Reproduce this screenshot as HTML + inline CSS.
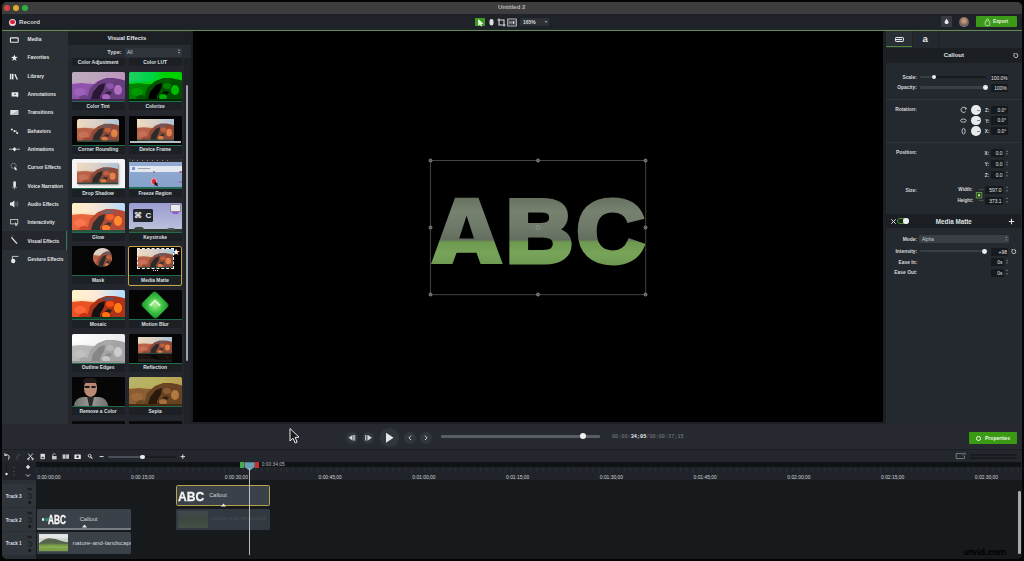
<!DOCTYPE html>
<html><head><meta charset="utf-8">
<style>
*{margin:0;padding:0;box-sizing:border-box}
html,body{width:1024px;height:561px;overflow:hidden;background:#040404;font-family:"Liberation Sans",sans-serif;color:#e8e8e8}
.a{position:absolute}
.t{position:absolute;white-space:nowrap;font-weight:bold;line-height:1}
.c{border-radius:50%}
.sb{position:absolute;margin-top:1.4px;left:27.6px;font-size:4.85px;font-weight:bold;color:#e4e6e8;white-space:nowrap;line-height:1}
.tile{position:absolute;width:53px;height:38px;background:#1c1f23;border-radius:1.5px;overflow:hidden}
.tile .img{position:absolute;left:0;top:0;width:53px;height:29px}
.tile .gl{position:absolute;left:0;top:29px;width:53px;height:1px;background:#1f6b4a}
.tile .lb{position:absolute;margin-top:1.4px;left:0;top:31.5px;width:53px;text-align:center;font-size:4.9px;font-weight:bold;color:#dfe1e3;line-height:1;white-space:nowrap}
.pl{position:absolute;margin-top:1.4px;font-size:4.6px;font-weight:bold;color:#d8dadc;white-space:nowrap;line-height:1;text-align:right}
.vb{position:absolute;padding-top:1px;background:#16191d;border-radius:1px;font-size:4.6px;color:#e6e8ea;text-align:right;line-height:8px;padding-right:1.5px;white-space:nowrap}
.rl{position:absolute;top:476.1px;font-size:4.9px;color:#d0d2d4;white-space:nowrap;line-height:1}
</style></head><body>
<!-- window background -->
<div class="a" style="left:1.5px;top:1.5px;width:1020px;height:557px;background:#23272d;border-radius:5px;overflow:hidden">
</div>
<!-- title bar -->
<div class="a" style="left:1.5px;top:1.5px;width:1020px;height:12px;background:#3d3d3e;border-radius:5px 5px 0 0"></div>
<div class="a c" style="left:4.3px;top:4.7px;width:6.2px;height:6.2px;background:#d4473f"></div>
<div class="a c" style="left:13.1px;top:4.7px;width:6.2px;height:6.2px;background:#d9ad2c"></div>
<div class="a c" style="left:21.9px;top:4.7px;width:6.2px;height:6.2px;background:#2ab33c"></div>
<div class="t" style="left:498px;top:4.2px;font-size:6px;color:#b9b9b9">Untitled 2</div>
<!-- toolbar -->
<div class="a" style="left:1.5px;top:13.5px;width:1020px;height:16.5px;background:#1f2228"></div>
<div class="a" style="left:1.5px;top:29.2px;width:1020px;height:2.6px;background:#1f2a22"></div><div class="a" style="left:1.5px;top:29.9px;width:1020px;height:1.2px;background:#66895a"></div>
<div class="a c" style="left:9px;top:18.8px;width:7px;height:7px;background:#f2d4d4"></div>
<div class="a c" style="left:10.3px;top:20.1px;width:4.4px;height:4.4px;background:#d8203a"></div>
<div class="t" style="left:19px;top:19.3px;font-size:6.1px;color:#d4d6d8">Record</div>
<!-- center tools -->
<div class="a" style="left:474.6px;top:17.6px;width:10.6px;height:8.5px;background:#3e9a1f"></div>
<svg class="a" style="left:474.6px;top:17.6px" width="11" height="9" viewBox="0 0 11 9"><path d="M3.2 1 L3.2 8 L4.9 6.5 L6.2 8.6 L7.3 8 L6.1 6 L8.4 5.8 Z" fill="#f0faea"/></svg>
<svg class="a" style="left:487px;top:17px" width="9" height="10" viewBox="0 0 9 10"><path d="M2.5 4 Q2.5 2 4.5 2 Q6.5 2 6.5 4 L6.5 6.5 Q6.5 8.5 4.5 8.5 Q2.5 8.5 2.5 6.5 Z" fill="#d9dbdd"/></svg>
<svg class="a" style="left:496px;top:16.5px" width="11" height="11" viewBox="0 0 11 11"><path d="M3 1.5 V8 H9.5 M1.5 3 H8 V9.5" stroke="#d9dbdd" stroke-width="1.1" fill="none"/></svg>
<svg class="a" style="left:507px;top:17.5px" width="10" height="9" viewBox="0 0 10 9"><rect x="0.7" y="1" width="8.6" height="7" fill="none" stroke="#c9cbcd" stroke-width="0.9"/><path d="M0.7 3.2 H9.3 M0.7 5.8 H9.3" stroke="#c9cbcd" stroke-width="0.6"/><path d="M2 4.5 H5" stroke="#c9cbcd" stroke-width="0.6"/><circle cx="6.5" cy="4.5" r="0.9" fill="#fff"/></svg>
<div class="a" style="left:520px;top:18.3px;width:29px;height:7.3px;background:#2c3138;border-radius:1px"></div>
<div class="t" style="left:523px;top:19.8px;font-size:5px;color:#d8dadc;font-weight:bold">165%</div>
<div class="t" style="left:545px;top:20px;font-size:4px;color:#9a9da0">&#9662;</div>
<!-- right tools -->
<div class="a" style="left:940.8px;top:15.8px;width:11.2px;height:11px;background:#363b42;border-radius:1px"></div>
<svg class="a" style="left:940.8px;top:15.8px" width="12" height="11" viewBox="0 0 12 11"><path d="M5.6 2.8 Q7.6 5 7.6 6.5 Q7.6 8 5.6 8 Q3.6 8 3.6 6.5 Q3.6 5 5.6 2.8Z" fill="#e6e8ea"/></svg>
<div class="a c" style="left:958.5px;top:16.8px;width:10px;height:10px;background:radial-gradient(circle at 50% 40%,#c9a58f 0,#a9826c 35%,#6c5a55 60%,#8a95a5 75%,#1f2228 100%)"></div>
<div class="a" style="left:975.9px;top:15.8px;width:41px;height:11.5px;background:#3b9a19;border-radius:1px"></div>
<svg class="a" style="left:983px;top:16.5px" width="9" height="10" viewBox="0 0 9 10"><path d="M3.4 3.6 Q3.4 1.6 4.5 1.6 Q5.6 1.6 5.6 3.6" stroke="#cfe8c0" stroke-width="0.7" fill="none"/><rect x="2.2" y="3.8" width="4.6" height="4.8" rx="1.2" stroke="#cfe8c0" stroke-width="0.8" fill="none"/></svg>
<div class="t" style="left:993px;top:20.2px;font-size:4.75px;color:#e8f4e0">Export</div>
<!-- sidebar -->
<div class="a" style="left:1.5px;top:31px;width:66px;height:393px;background:#2b2f36"></div>
<div class="a" style="left:1.5px;top:231.4px;width:64.5px;height:18.7px;background:#24282e"></div>
<div class="a" style="left:65.5px;top:231.4px;width:1px;height:18.7px;background:#2f7a5a"></div>
<div class="sb" style="top:36.55px">Media</div>
<div class="sb" style="top:54.88px">Favorites</div>
<div class="sb" style="top:73.21px">Library</div>
<div class="sb" style="top:91.54px">Annotations</div>
<div class="sb" style="top:109.87px">Transitions</div>
<div class="sb" style="top:128.20px">Behaviors</div>
<div class="sb" style="top:146.53px">Animations</div>
<div class="sb" style="top:164.86px">Cursor Effects</div>
<div class="sb" style="top:183.19px">Voice Narration</div>
<div class="sb" style="top:201.52px">Audio Effects</div>
<div class="sb" style="top:219.85px">Interactivity</div>
<div class="sb" style="top:238.18px">Visual Effects</div>
<div class="sb" style="top:256.51px">Gesture Effects</div>
<svg class="a" style="left:0;top:0" width="68" height="270" viewBox="0 0 68 270" fill="#e6e8ea">
<rect x="10.4" y="37.9" width="7.8" height="4.4" rx="0.6" fill="none" stroke="#e6e8ea" stroke-width="1.1"/>
<path d="M14.4 54.4 L15.3 56.8 L17.8 56.9 L15.8 58.4 L16.5 60.9 L14.4 59.5 L12.3 60.9 L13 58.4 L11 56.9 L13.5 56.8Z"/>
<rect x="9.9" y="73.8" width="1.5" height="5.6"/><rect x="12" y="73.8" width="1.5" height="5.6"/><path d="M14.2 74.4 L15.6 73.9 L18 79.4 L16.5 79.4Z"/>
<path d="M11.6 92.3 H18.3 V96.4 H17.6 L18.2 97.6 L16.2 96.4 H11.6Z"/><path d="M14.1 94.3 H15.8 M14.95 93.5 V95.1" stroke="#2b2f36" stroke-width="0.6"/>
<rect x="10.3" y="110" width="8" height="5" fill="#dfe1e3"/><path d="M10.3 115 L18.3 110 V115Z" fill="#b9bcc0"/>
<circle cx="11.9" cy="129.4" r="1"/><circle cx="14.6" cy="131.2" r="1.1"/><circle cx="17.2" cy="133" r="1.1"/><path d="M16.4 130 V132" stroke="#e6e8ea" stroke-width="0.4"/>
<path d="M9 149.2 H20" stroke="#e6e8ea" stroke-width="0.7"/><path d="M14.5 147 L16.4 149.2 L14.5 151.4 L12.6 149.2Z"/>
<circle cx="13.6" cy="165.8" r="2.6" fill="none" stroke="#8d9196" stroke-width="0.7"/><path d="M14.2 166.5 L17 169 L16.2 170.6 L14.6 169.5Z"/>
<rect x="13.3" y="181.2" width="2.6" height="6" rx="1.3"/><path d="M12.2 187.6 H17 M14.6 187.6 V189.5" stroke="#b9bcc0" stroke-width="0.7"/>
<path d="M10 202.6 H11.8 L14.4 200.4 V207.6 L11.8 205.4 H10Z"/><path d="M15.6 202.2 Q17 204 15.6 205.8 M17 201.2 Q19 204 17 206.8" stroke="#8d9196" stroke-width="0.6" fill="none"/>
<rect x="10.6" y="219.5" width="7.2" height="4.4" fill="none" stroke="#d0d2d4" stroke-width="0.8"/><path d="M15 222 L17.6 225.4 L16.2 225.6 L15.6 226.4Z"/>
<path d="M11.4 237.4 L17 243.6" stroke="#e6e8ea" stroke-width="1.3"/><path d="M12.6 235.6 V236.6" stroke="#b9bcc0" stroke-width="0.5"/>
<circle cx="13.2" cy="261" r="2.2"/><path d="M12.4 261 V256.4 H18.4" stroke="#e6e8ea" stroke-width="0.8" fill="none"/>
</svg>
<svg width="0" height="0" style="position:absolute">
<defs>
<filter id="mb" x="-10%" y="-10%" width="120%" height="120%"><feGaussianBlur stdDeviation="0.7"/></filter><linearGradient id="skyh" x1="0" y1="0" x2="1" y2="0"><stop offset="0" stop-color="#f0dcc0"/><stop offset="0.5" stop-color="#d8d0c8"/><stop offset="1" stop-color="#a8c4dc"/></linearGradient><linearGradient id="sky" x1="0" y1="0" x2="0" y2="1"><stop offset="0" stop-color="#e0c0a0" stop-opacity="0"/><stop offset="1" stop-color="#d08060"/></linearGradient>
<linearGradient id="mt" x1="0" y1="0" x2="1" y2="1"><stop offset="0" stop-color="#c06a3a"/><stop offset="0.5" stop-color="#8a4a2c"/><stop offset="1" stop-color="#a05a34"/></linearGradient>
<symbol id="mtn" viewBox="0 0 53 29" preserveAspectRatio="none">
<rect width="53" height="29" fill="#8a5040"/>
<g filter="url(#mb)">
<rect x="-2" y="-2" width="57" height="15" fill="url(#skyh)"/>
<rect x="-2" y="8" width="57" height="10" fill="url(#sky)"/>
<path d="M-2 12 L10 11 L20 12 L53 12 V31 H-2Z" fill="#b86448"/>
<path d="M14 31 L18 16 L26 9 L34 6 L42 6 L48 7 L55 9 V31Z" fill="#8e4a3a"/>
<path d="M28 10 L34 7 L40 7 L44 9 L36 11Z" fill="#6a5a60"/>
<path d="M18 31 L21 20 L27 13 L33 11 L32 17 L28 24 L28 31Z" fill="#2e2c2a"/>
<path d="M27 31 L30 24 L36 19 L40 20 L36 26 L34 31Z" fill="#3a3430"/>
<ellipse cx="46" cy="18" rx="4" ry="5" fill="#e08448"/>
<ellipse cx="38" cy="14" rx="4" ry="3" fill="#c0603c"/>
<ellipse cx="34" cy="25" rx="4" ry="3" fill="#d87a44"/>
<ellipse cx="8" cy="20" rx="6" ry="4" fill="#c87058"/>
<ellipse cx="12" cy="26" rx="5" ry="3" fill="#a04a38"/>
<rect x="-2" y="27" width="57" height="4" fill="#2e4a3c"/>
</g>
</symbol>
<symbol id="hill" viewBox="0 0 53 29" preserveAspectRatio="none">
<rect width="53" height="29" fill="#cfd3cf"/>
<rect width="53" height="7" fill="#e4e6e4"/>
<path d="M0 16 Q8 8 18 7 Q30 7 40 12 Q46 14 53 14 V29 H0Z" fill="#55644e"/>
<path d="M0 17 Q20 15 53 17 V29 H0Z" fill="#6a8a48"/>
<path d="M0 20 Q26 18 53 20 V29 H0Z" fill="#86aa50"/>
<path d="M0 25 Q26 23 53 25 V29 H0Z" fill="#7a9e48"/>
</symbol>
</defs></svg>
<!-- media panel -->
<div class="a" style="left:67.5px;top:31px;width:125px;height:393px;background:#23272d"></div>
<div class="a" style="left:67.5px;top:31.5px;width:125px;height:13.5px;background:#1c2024"></div>
<div class="t" style="left:107.5px;top:36px;font-size:5.95px;color:#e2e4e6">Visual Effects</div>
<div class="a" style="left:67.5px;top:58px;width:116px;height:366px;overflow:hidden">
<div class="tile" style="left:4.1px;top:-29.6px"><div class="a" style="left:0;top:0;width:53px;height:29px;background:#0a0a0a"></div><div class="gl"></div><div class="lb">Color Adjustment</div></div>
<div class="tile" style="left:61.1px;top:-29.6px"><div class="a" style="left:0;top:0;width:53px;height:29px;background:#0a0a0a"></div><div class="gl"></div><div class="lb">Color LUT</div></div>
<div class="tile" style="left:4.1px;top:14.0px"><svg class="a" style="left:0px;top:0px;filter:sepia(1) hue-rotate(235deg) saturate(2.6) brightness(0.72) contrast(1.1)" width="53" height="29"><use href="#mtn" width="53" height="29"/></svg><div class="gl"></div><div class="lb">Color Tint</div></div>
<div class="tile" style="left:61.1px;top:14.0px"><svg class="a" style="left:0px;top:0px;filter:grayscale(1) sepia(1) hue-rotate(60deg) saturate(5) brightness(0.7) contrast(1.6)" width="53" height="29"><use href="#mtn" width="53" height="29"/></svg><div class="gl"></div><div class="lb">Colorize</div></div>
<div class="tile" style="left:4.1px;top:57.6px"><div class="a" style="left:0;top:0;width:53px;height:29px;background:#050505"></div><div class="a" style="left:5px;top:3px;width:42.5px;height:23px;border-radius:2.5px;overflow:hidden"><svg class="a" style="left:0px;top:0px;" width="43" height="23"><use href="#mtn" width="43" height="23"/></svg></div><div class="gl"></div><div class="lb">Corner Rounding</div></div>
<div class="tile" style="left:61.1px;top:57.6px"><div class="a" style="left:0;top:0;width:53px;height:29px;background:#050505"></div><svg class="a" style="left:8px;top:3px;" width="37" height="22"><use href="#mtn" width="37" height="22"/></svg><div class="a" style="left:1px;top:25.5px;width:51px;height:1.6px;background:#b8bcc0"></div><div class="gl"></div><div class="lb">Device Frame</div></div>
<div class="tile" style="left:4.1px;top:101.2px"><div class="a" style="left:0;top:0;width:53px;height:29px;background:#f4f4f4"></div><div class="a" style="left:5.5px;top:3.5px;width:41px;height:21px;box-shadow:1px 1px 2px #888;overflow:hidden;border-radius:1px"><svg class="a" style="left:0px;top:0px;" width="41" height="21"><use href="#mtn" width="41" height="21"/></svg></div><div class="gl"></div><div class="lb">Drop Shadow</div></div>
<div class="tile" style="left:61.1px;top:101.2px"><div class="a" style="left:0;top:0;width:53px;height:29px;background:linear-gradient(#94acd0,#86a2cc)"></div><div class="a" style="left:0;top:0;width:53px;height:3.2px;background:#2a2c30"></div><div class="a" style="left:3px;top:0.8px;width:40px;height:1.2px;background:repeating-linear-gradient(90deg,#8a8c90 0 1.5px,transparent 1.5px 5px)"></div><div class="a" style="left:1px;top:6.8px;width:52px;height:6px;background:#e4e8f0"></div><div class="a" style="left:3.5px;top:8px;width:3.2px;height:3.2px;background:#6a96d8;border-radius:0.5px"></div><div class="a" style="left:9px;top:9px;width:12px;height:1.2px;background:#a0a4aa"></div><div class="a c" style="left:24px;top:11.6px;width:2.6px;height:2.6px;background:#b06a90"></div><div class="a c" style="left:50.6px;top:11.6px;width:2.6px;height:2.6px;background:#b06a90"></div><div class="a c" style="left:50.6px;top:21.6px;width:2.6px;height:2.6px;background:#b06a90"></div><div class="a c" style="left:22.3px;top:19.3px;width:6.4px;height:6.4px;background:#e02838;border:0.5px solid #f0a0a8"></div><svg class="a" style="left:25px;top:21.5px" width="5" height="6"><path d="M0.5 0.5 L0.5 5 L1.8 3.8 L3 5.6 L4 5 L2.8 3.4 L4.4 3.2Z" fill="#111"/></svg><div class="a" style="left:0;top:27.6px;width:53px;height:1.4px;background:#2a6a5a"></div><div class="gl"></div><div class="lb">Freeze Region</div></div>
<div class="tile" style="left:4.1px;top:144.8px"><svg class="a" style="left:0px;top:0px;filter:saturate(1.4) brightness(1.1)" width="53" height="29"><use href="#mtn" width="53" height="29"/></svg><div class="gl"></div><div class="lb">Glow</div></div>
<div class="tile" style="left:61.1px;top:144.8px"><div class="a" style="left:0;top:0;width:53px;height:29px;background:linear-gradient(#9a9cd2,#aeb2d8 55%,#bcc4da)"></div><div class="a" style="left:0;top:26.6px;width:53px;height:2.4px;background:#2e3a30"></div><div class="a" style="left:5px;top:24.6px;width:10px;height:3px;border-radius:3px 3px 0 0;background:#3a4638"></div><div class="a" style="left:38px;top:25.4px;width:8px;height:2px;border-radius:3px 3px 0 0;background:#4a5448"></div><div class="a" style="left:4.5px;top:6.2px;width:19.5px;height:13.4px;background:#22262c;border-radius:1.5px;color:#e8e8e8;font-size:8px;font-weight:bold;line-height:13.4px;text-align:center;word-spacing:1px">&#8984; C</div><div class="a" style="left:41px;top:1.5px;width:11px;height:8px;background:#e8e8f0;border:0.5px solid #888"></div><div class="a" style="left:43px;top:9px;width:7px;height:2.5px;background:#a050e0;border-radius:0 0 3px 3px"></div><div class="gl"></div><div class="lb">Keystroke</div></div>
<div class="tile" style="left:4.1px;top:188.4px"><div class="a" style="left:0;top:0;width:53px;height:29px;background:#050505"></div><div class="a c" style="left:21.8px;top:1.6px;width:18.6px;height:18.6px;overflow:hidden"><svg class="a" style="left:-5px;top:-1px;" width="29" height="21"><use href="#mtn" width="29" height="21"/></svg></div><div class="gl"></div><div class="lb">Mask</div></div>
<div class="tile" style="left:61.1px;top:188.4px"><div class="a" style="left:0;top:0;width:53px;height:29px;background:#050505"></div><div class="a" style="left:8.7px;top:2.6px;width:36px;height:19.3px;overflow:hidden"><svg class="a" style="left:0;top:0" width="36" height="19.3"><use href="#mtn" width="36" height="19.3"/></svg></div><div class="a" style="left:8px;top:2px;width:37.4px;height:20.6px;border:1.5px dashed #f4f4f4"></div><div class="a" style="left:43.5px;top:1.5px;font-size:9px;color:#fff;line-height:1">&#9733;</div><div class="a" style="left:24px;top:22px;width:5px;height:3px;border-bottom:1px dotted #ddd"></div><div class="gl"></div><div class="lb">Media Matte</div></div>
<div class="a" style="left:60.3px;top:187.6px;width:54.6px;height:40px;border:1.1px solid #c9a440;border-radius:2px"></div>
<div class="tile" style="left:4.1px;top:232.0px"><svg class="a" style="left:0px;top:0px;filter:saturate(1.35) contrast(1.3)" width="53" height="29"><use href="#mtn" width="53" height="29"/></svg><div class="gl"></div><div class="lb">Mosaic</div></div>
<div class="tile" style="left:61.1px;top:232.0px"><div class="a" style="left:0;top:0;width:53px;height:29px;background:#050505"></div><div class="a" style="left:16.5px;top:4.5px;width:20px;height:20px;transform:rotate(45deg) scaleX(1.05);background:radial-gradient(#a8f090,#38c040 55%,#1f8a30);filter:blur(0.7px);border-radius:3px"></div><div class="a" style="left:22.5px;top:10.5px;width:8px;height:8px;transform:rotate(45deg);border-left:2px solid #d8ffd0;border-top:2px solid #d8ffd0;filter:blur(0.3px)"></div><div class="gl"></div><div class="lb">Motion Blur</div></div>
<div class="tile" style="left:4.1px;top:275.6px"><svg class="a" style="left:0px;top:0px;filter:grayscale(1) contrast(0.45) brightness(1.5)" width="53" height="29"><use href="#mtn" width="53" height="29"/></svg><div class="gl"></div><div class="lb">Outline Edges</div></div>
<div class="tile" style="left:61.1px;top:275.6px"><div class="a" style="left:0;top:0;width:53px;height:29px;background:#050505"></div><svg class="a" style="left:9px;top:3px;" width="34" height="17"><use href="#mtn" width="34" height="17"/></svg><svg class="a" style="left:9px;top:20px;transform:scaleY(-1);opacity:0.13" width="34" height="8"><use href="#mtn" width="34" height="8"/></svg><div class="gl"></div><div class="lb">Reflection</div></div>
<div class="tile" style="left:4.1px;top:319.2px"><div class="a" style="left:0;top:0;width:53px;height:29px;background:#060606"></div><div class="a" style="left:2px;top:20px;width:34px;height:9px;border-radius:10px 10px 0 0;background:linear-gradient(90deg,#6e6e6c,#9a9a96 50%,#6e6e6c)"></div><div class="a" style="left:15.5px;top:19.5px;width:7px;height:9.5px;background:#2a2a28;clip-path:polygon(0 0,100% 0,70% 100%,30% 100%)"></div><div class="a" style="left:12px;top:2.5px;width:13px;height:17px;border-radius:45% 45% 50% 50%;background:#b88a74"></div><div class="a" style="left:11.4px;top:1.2px;width:14.2px;height:5px;border-radius:6px 6px 1px 1px;background:#221a18"></div><div class="a" style="left:12.6px;top:8.4px;width:5.4px;height:2.8px;border:0.6px solid #1a1a1a;border-radius:1px"></div><div class="a" style="left:19px;top:8.4px;width:5.4px;height:2.8px;border:0.6px solid #1a1a1a;border-radius:1px"></div><div class="gl"></div><div class="lb">Remove a Color</div></div>
<div class="tile" style="left:61.1px;top:319.2px"><svg class="a" style="left:0px;top:0px;filter:sepia(1) saturate(2.2) hue-rotate(-12deg) brightness(0.7) contrast(1.1)" width="53" height="29"><use href="#mtn" width="53" height="29"/></svg><div class="gl"></div><div class="lb">Sepia</div></div>
<div class="tile" style="left:4.1px;top:362.8px"><div class="a" style="left:0;top:0;width:53px;height:29px;background:#0a0a0a"></div><div class="gl"></div><div class="lb"></div></div>
<div class="tile" style="left:61.1px;top:362.8px"><div class="a" style="left:0;top:0;width:53px;height:29px;background:#0a0a0a"></div><div class="gl"></div><div class="lb"></div></div>
</div>
<div class="a" style="left:67.5px;top:45px;width:123px;height:13px;background:#262b31"></div>
<div class="t" style="left:107.3px;top:50px;font-size:5.5px;color:#d8dadc">Type:</div>
<div class="a" style="left:125px;top:47.5px;width:56.7px;height:9.5px;background:#30353c;border-radius:1px"></div>
<div class="t" style="left:127px;top:49.6px;font-size:5px;color:#d0d2d4;font-weight:normal">All</div>
<div class="t" style="left:178px;top:48.5px;font-size:3.5px;color:#9a9da0;font-weight:normal;line-height:3.5px">&#9652;<br>&#9662;</div>
<div class="a" style="left:184px;top:58px;width:8.5px;height:366px;background:#1e2126"></div>
<div class="a" style="left:185.8px;top:85.3px;width:2.4px;height:276px;background:#9ea2a8;border-radius:1.2px"></div>
<div class="a" style="left:190.5px;top:31px;width:2.5px;height:393px;background:#1a1d21"></div>
<!-- canvas -->
<div class="a" style="left:193px;top:31px;width:690px;height:391.5px;background:#000"></div>
<div class="a" style="left:883px;top:31px;width:3px;height:393px;background:#1c1f24"></div>
<div class="a" style="left:190.5px;top:421.5px;width:695px;height:2.5px;background:#1c1f24"></div>
<svg class="a" style="left:420px;top:185px" width="240" height="90" viewBox="420 185 240 90">
<defs><linearGradient id="land" gradientUnits="userSpaceOnUse" x1="0" y1="-64" x2="0" y2="6">
<stop offset="0" stop-color="#66725f"/><stop offset="0.2" stop-color="#76826f"/><stop offset="0.45" stop-color="#6d7868"/><stop offset="0.6" stop-color="#646e5e"/><stop offset="0.64" stop-color="#6e9a50"/><stop offset="0.8" stop-color="#78a45a"/><stop offset="1" stop-color="#6a964e"/></linearGradient><linearGradient id="land2" gradientUnits="userSpaceOnUse" x1="0" y1="197.5" x2="0" y2="267.5"><stop offset="0" stop-color="#66725f"/><stop offset="0.2" stop-color="#76826f"/><stop offset="0.45" stop-color="#6d7868"/><stop offset="0.6" stop-color="#646e5e"/><stop offset="0.64" stop-color="#6e9a50"/><stop offset="0.8" stop-color="#78a45a"/><stop offset="1" stop-color="#6a964e"/></linearGradient></defs>
<path id="LA" fill="url(#land2)" fill-rule="evenodd" d="M431 264 L455 197.8 L478.5 197.8 L502.7 264 L480.6 264 L476.5 252.8 L456.6 252.8 L452.4 264 Z M466.6 215.7 L474 238.5 L459.2 238.5 Z"/>
<g fill="url(#land)" stroke="url(#land)" stroke-width="5" stroke-linejoin="miter" stroke-miterlimit="3" font-family="Liberation Sans" font-weight="bold" font-size="89">

<text id="LB" transform="translate(505.8,261.5) scale(1.05,1)">B</text>
<text id="LC" transform="translate(576.5,261.5) scale(1.06,1)">C</text>
</g></svg>
<svg class="a" style="left:425px;top:155px" width="226" height="145" viewBox="425 155 226 145"><rect x="430.4" y="160.5" width="215.3" height="134.2" fill="none" stroke="#4a4a4a" stroke-width="0.9"/><circle cx="430.5" cy="160.5" r="1.5" fill="#555" stroke="#9a9a9a" stroke-width="0.8"/><circle cx="430.5" cy="227.5" r="1.5" fill="#555" stroke="#9a9a9a" stroke-width="0.8"/><circle cx="430.5" cy="294.5" r="1.5" fill="#555" stroke="#9a9a9a" stroke-width="0.8"/><circle cx="538" cy="160.5" r="1.5" fill="#555" stroke="#9a9a9a" stroke-width="0.8"/><circle cx="538" cy="294.5" r="1.5" fill="#555" stroke="#9a9a9a" stroke-width="0.8"/><circle cx="645.5" cy="160.5" r="1.5" fill="#555" stroke="#9a9a9a" stroke-width="0.8"/><circle cx="645.5" cy="227.5" r="1.5" fill="#555" stroke="#9a9a9a" stroke-width="0.8"/><circle cx="645.5" cy="294.5" r="1.5" fill="#555" stroke="#9a9a9a" stroke-width="0.8"/><circle cx="538" cy="227.5" r="2" fill="none" stroke="#9a9a9a" stroke-width="0.7"/><path d="M540 227.5 H545" stroke="#7a7a7a" stroke-width="0.6"/><circle cx="545.5" cy="227.5" r="0.8" fill="#7a7a7a"/></svg>
<!-- properties -->
<div class="a" style="left:886px;top:31px;width:135.5px;height:393px;background:#24292f"></div>
<div class="a" style="left:886px;top:31px;width:26px;height:16.5px;background:#2a2e35"></div>
<div class="a" style="left:886px;top:46.3px;width:26px;height:1.2px;background:#4f8a3a"></div>
<div class="a" style="left:912px;top:31px;width:0.6px;height:16.5px;background:#1e2126"></div>
<div class="a" style="left:938.4px;top:31px;width:0.6px;height:16.5px;background:#1e2126"></div>
<div class="a" style="left:895.2px;top:36.6px;width:8.4px;height:5.6px;border:1.2px solid #e6e8ea;border-radius:1.2px;background:#3a3f46"></div>
<div class="a" style="left:896.4px;top:38.6px;width:6px;height:1.6px;background:#e6e8ea"></div>
<div class="t" style="left:922.4px;top:34.4px;font-size:9.6px;color:#e6e8ea;font-weight:bold">a</div>
<div class="a" style="left:886px;top:47.5px;width:135.5px;height:15px;background:#1b1e22"></div>
<div class="t" style="left:943.7px;top:52px;font-size:6px;color:#dfe1e3">Callout</div>
<svg class="a" style="left:1011.5px;top:51.5px" width="7" height="7" viewBox="0 0 7 7"><path d="M2.2 2.4 A2 2 0 1 0 3.6 1.6" fill="none" stroke="#dfe1e3" stroke-width="0.8"/><path d="M1.4 1.2 L3.2 1.2 L2.3 2.8Z" fill="#dfe1e3"/></svg>
<div class="pl" style="right:107.2px;top:74.8px;font-size:4.9px">Scale:</div>
<div class="a" style="left:920.4px;top:76px;width:66px;height:2.4px;background:#15181c;border-radius:1px"></div>
<div class="a" style="left:920.4px;top:76px;width:14px;height:2.4px;background:#3a3f46;border-radius:1px"></div>
<div class="a c" style="left:931.6px;top:74.9px;width:4.6px;height:4.6px;background:#eceef0"></div>
<div class="vb" style="left:991px;top:73.7px;width:17.3px;height:7.5px;line-height:7.5px;font-size:4.9px">100.0%</div>
<div class="pl" style="right:107.2px;top:85.1px;font-size:4.9px">Opacity:</div>
<div class="a" style="left:920.4px;top:86.4px;width:66px;height:2.4px;background:#3a3f46;border-radius:1px"></div>
<div class="a c" style="left:983.4px;top:85.3px;width:4.8px;height:4.8px;background:#eceef0"></div>
<div class="vb" style="left:991px;top:84.0px;width:17.3px;height:7.5px;line-height:7.5px;font-size:4.9px">100%</div>
<div class="a" style="left:886px;top:99.2px;width:135px;height:0.8px;background:#30353c"></div>
<div class="pl" style="left:895.2px;top:106.6px;font-size:4.9px">Rotation:</div>
<div class="a c" style="left:971.2px;top:105.0px;width:9.8px;height:9.8px;background:#e8eaec"></div>
<div class="a" style="left:977px;top:109.6px;width:2.6px;height:0.5px;background:#8a8a8a"></div>
<div class="pl" style="right:34.6px;top:107.6px;font-size:4.6px">Z:</div>
<div class="vb" style="left:990.6px;top:105.6px;width:17.2px;height:8.6px;line-height:8.6px;font-size:4.9px">0.0&deg;</div>
<div class="a c" style="left:971.2px;top:115.7px;width:9.8px;height:9.8px;background:#e8eaec"></div>
<div class="a" style="left:977px;top:120.3px;width:2.6px;height:0.5px;background:#8a8a8a"></div>
<div class="pl" style="right:34.6px;top:118.3px;font-size:4.6px">Y:</div>
<div class="vb" style="left:990.6px;top:116.3px;width:17.2px;height:8.6px;line-height:8.6px;font-size:4.9px">0.0&deg;</div>
<div class="a c" style="left:971.2px;top:126.3px;width:9.8px;height:9.8px;background:#e8eaec"></div>
<div class="a" style="left:977px;top:130.9px;width:2.6px;height:0.5px;background:#8a8a8a"></div>
<div class="pl" style="right:34.6px;top:128.9px;font-size:4.6px">X:</div>
<div class="vb" style="left:990.6px;top:126.9px;width:17.2px;height:8.6px;line-height:8.6px;font-size:4.9px">0.0&deg;</div>
<svg class="a" style="left:958px;top:104px" width="11" height="32" viewBox="958 104 11 32" fill="none" stroke="#dfe1e3" stroke-width="0.8"><path d="M965.8 108.4 A2.6 2.6 0 1 0 965.6 111.6"/><path d="M965 107.5 L966.6 108.6 L965 109.6" /><ellipse cx="963.4" cy="120.6" rx="2.8" ry="1.6"/><ellipse cx="963.6" cy="131.2" rx="1.6" ry="2.8"/></svg>
<div class="a" style="left:886px;top:142px;width:135px;height:0.8px;background:#30353c"></div>
<div class="pl" style="left:895.9px;top:149.8px;font-size:4.9px">Position:</div>
<div class="pl" style="right:35.0px;top:150.9px;font-size:4.6px">X:</div>
<div class="vb" style="left:990.8px;top:149.2px;width:13.2px;height:8px;line-height:8px;font-size:4.9px">0.0</div>
<div class="t" style="left:1005.6px;top:149.6px;font-size:3px;line-height:3.6px;color:#7d8186;font-weight:normal">&#9650;<br>&#9660;</div>
<div class="pl" style="right:35.0px;top:161.9px;font-size:4.6px">Y:</div>
<div class="vb" style="left:990.8px;top:160.2px;width:13.2px;height:8px;line-height:8px;font-size:4.9px">0.0</div>
<div class="t" style="left:1005.6px;top:160.6px;font-size:3px;line-height:3.6px;color:#7d8186;font-weight:normal">&#9650;<br>&#9660;</div>
<div class="pl" style="right:35.0px;top:172.7px;font-size:4.6px">Z:</div>
<div class="vb" style="left:990.8px;top:171.0px;width:13.2px;height:8px;line-height:8px;font-size:4.9px">0.0</div>
<div class="t" style="left:1005.6px;top:171.4px;font-size:3px;line-height:3.6px;color:#7d8186;font-weight:normal">&#9650;<br>&#9660;</div>
<div class="pl" style="left:905.4px;top:187.6px;font-size:4.9px">Size:</div>
<div class="pl" style="right:51.4px;top:187.1px;font-size:4.6px">Width:</div>
<div class="pl" style="right:50.8px;top:198.1px;font-size:4.6px">Height:</div>
<div class="vb" style="left:985.4px;top:185.6px;width:17.6px;height:8px;line-height:8px;font-size:4.9px">597.0</div>
<div class="vb" style="left:985.4px;top:196.6px;width:17.6px;height:8px;line-height:8px;font-size:4.9px">373.1</div>
<div class="t" style="left:1005.6px;top:186.0px;font-size:3px;line-height:3.6px;color:#7d8186;font-weight:normal">&#9650;<br>&#9660;</div>
<div class="t" style="left:1005.6px;top:197.0px;font-size:3px;line-height:3.6px;color:#7d8186;font-weight:normal">&#9650;<br>&#9660;</div>
<svg class="a" style="left:973px;top:188px" width="12" height="14" viewBox="0 0 12 14"><path d="M6 1.6 H10.6 M6 12.4 H10.6" stroke="#4f8a3a" stroke-width="0.6"/><rect x="3.2" y="4.4" width="5.6" height="5.6" fill="#2e4a24" stroke="#6ab04a" stroke-width="0.7"/><rect x="5" y="6.2" width="2" height="2" fill="#b8f090"/></svg>
<div class="a" style="left:886.4px;top:213.8px;width:135px;height:14px;background:#1b1e22"></div>
<svg class="a" style="left:889.5px;top:217.8px" width="7" height="7" viewBox="0 0 7 7"><path d="M1.3 1.3 L5.7 5.7 M5.7 1.3 L1.3 5.7" stroke="#e2e4e6" stroke-width="1"/></svg>
<div class="a" style="left:897px;top:218px;width:12.2px;height:6.2px;border-radius:3.1px;border:0.7px solid #4f8a3a;background:#1b2a1a"></div>
<div class="a c" style="left:903.2px;top:218.4px;width:5.4px;height:5.4px;background:#eceef0"></div>
<div class="t" style="left:935.8px;top:218.5px;font-size:6.3px;color:#dfe1e3">Media Matte</div>
<svg class="a" style="left:1007.5px;top:217.5px" width="7" height="7" viewBox="0 0 7 7"><path d="M3.5 0.8 V6.2 M0.8 3.5 H6.2" stroke="#e2e4e6" stroke-width="1.1"/></svg>
<div class="pl" style="right:106.8px;top:236.4px;font-size:4.9px">Mode:</div>
<div class="a" style="left:919.2px;top:235px;width:90px;height:7.8px;background:#3a3f46;border-radius:1px"></div>
<div class="t" style="left:922px;top:237.6px;font-size:4.6px;color:#cfd1d3;font-weight:normal">Alpha</div>
<div class="t" style="left:1005px;top:235.6px;font-size:2.8px;line-height:3.2px;color:#9a9da0;font-weight:normal">&#9650;<br>&#9660;</div>
<div class="pl" style="right:106.8px;top:249.0px;font-size:4.9px">Intensity:</div>
<div class="a" style="left:920.4px;top:250.3px;width:65px;height:2.2px;background:#3a3f46;border-radius:1px"></div>
<div class="a c" style="left:982.4px;top:249px;width:4.8px;height:4.8px;background:#eceef0"></div>
<div class="vb" style="left:990.5px;top:247.5px;width:17.9px;height:8px;line-height:8px;font-size:4.9px">+98</div>
<svg class="a" style="left:1009.8px;top:248px" width="7" height="7" viewBox="0 0 7 7"><path d="M2.2 2.4 A2 2 0 1 0 3.6 1.6" fill="none" stroke="#dfe1e3" stroke-width="0.8"/><path d="M1.4 1.2 L3.2 1.2 L2.3 2.8Z" fill="#dfe1e3"/></svg>
<div class="pl" style="right:106.8px;top:259.6px;font-size:4.9px">Ease In:</div>
<div class="vb" style="left:991px;top:258.4px;width:13.0px;height:8px;line-height:8px;font-size:4.9px">0s</div>
<div class="t" style="left:1005.6px;top:258.8px;font-size:3px;line-height:3.6px;color:#7d8186;font-weight:normal">&#9650;<br>&#9660;</div>
<div class="pl" style="right:106.8px;top:269.9px;font-size:4.9px">Ease Out:</div>
<div class="vb" style="left:991px;top:268.8px;width:13.0px;height:8px;line-height:8px;font-size:4.9px">0s</div>
<div class="t" style="left:1005.6px;top:269.2px;font-size:3px;line-height:3.6px;color:#7d8186;font-weight:normal">&#9650;<br>&#9660;</div>
<!-- playback -->
<div class="a" style="left:1.5px;top:424px;width:1020px;height:26px;background:#262a30"></div>
<div class="a" style="left:1.5px;top:449.4px;width:1020px;height:0.8px;background:#1b1e22"></div>
<div class="a c" style="left:345.9px;top:431.8px;width:12px;height:12px;background:#31363d"></div>
<div class="a c" style="left:362.3px;top:431.8px;width:12px;height:12px;background:#31363d"></div>
<div class="a c" style="left:379.5px;top:428.3px;width:19.0px;height:19.0px;background:#31363d"></div>
<div class="a c" style="left:404.0px;top:431.8px;width:12px;height:12px;background:#31363d"></div>
<div class="a c" style="left:420.0px;top:431.8px;width:12px;height:12px;background:#31363d"></div>
<svg class="a" style="left:340px;top:428px" width="100" height="20" viewBox="340 428 100 20" fill="#d6d8da"><path d="M348.6 437.8 L352.4 435 V440.6Z"/><rect x="352.8" y="435" width="0.9" height="5.6"/><rect x="354.3" y="435" width="0.9" height="5.6"/><rect x="365.2" y="435" width="0.9" height="5.6"/><rect x="366.7" y="435" width="0.9" height="5.6"/><path d="M368 435 L371.8 437.8 L368 440.6Z"/><path d="M386 432.8 L393.6 437.8 L386 442.8Z" fill="#e4e6e8"/><path d="M411 435.6 L409 437.8 L411 440" fill="none" stroke="#d6d8da" stroke-width="1"/><path d="M425 435.6 L427 437.8 L425 440" fill="none" stroke="#d6d8da" stroke-width="1"/></svg>
<div class="a" style="left:441.4px;top:435.4px;width:159px;height:2.4px;background:#585d64;border-radius:1px"></div>
<div class="a c" style="left:579.6px;top:433.4px;width:6px;height:6px;background:#f2f2f2"></div>
<div class="t" style="left:612px;top:434.6px;font-family:'Liberation Mono';font-size:5.2px;color:#7e8286;font-weight:normal">00:00:<span style="color:#e8eaec;font-weight:bold">34;05</span>/00:00:37;15</div>
<div class="a" style="left:969px;top:432px;width:47.5px;height:12px;background:#3a9a14;border-radius:1px"></div>
<div class="a c" style="left:975.8px;top:435.6px;width:5.4px;height:5.4px;border:1.7px solid #eef8e8"></div>
<div class="t" style="left:985px;top:435.7px;font-size:5.05px;color:#eef8e8">Properties</div>
<svg class="a" style="left:288px;top:427px" width="14" height="19" viewBox="0 0 14 19"><path d="M2 1.5 L2 14 L5 11.2 L7.2 16 L9.2 15.1 L7.1 10.4 L11 10.2Z" fill="#1a1a1a" stroke="#e8e8e8" stroke-width="1"/></svg>
<!-- timeline toolbar -->
<div class="a" style="left:1.5px;top:450.2px;width:1020px;height:11.5px;background:#23272d"></div>
<svg class="a" style="left:0;top:449px" width="190" height="14" viewBox="0 449 190 14" fill="none" stroke="#dcdee0" stroke-width="0.9"><path d="M5 455 Q8.5 453.6 9.2 457 L8.4 459.6"/><path d="M4.8 453 L4.8 455.6 L7.2 455.2" /><path d="M21 455 Q17.5 453.6 16.8 457 L17.6 459.6" stroke="#4a4f56"/><path d="M28.2 453.6 L32.8 459 M32.8 453.6 L28.2 459"/><circle cx="28.4" cy="459" r="0.8"/><circle cx="32.6" cy="459" r="0.8"/><rect x="40.5" y="453.8" width="4.4" height="5.4" fill="#dcdee0" stroke="none"/><rect x="41.6" y="456.8" width="2.2" height="1.6" fill="#444" stroke="none"/><rect x="52" y="456" width="4.6" height="3.4" fill="#c4c6c8" stroke="none"/><path d="M52.8 456 V454.4 Q54.2 452.8 55.6 454.4" stroke="#c4c6c8" stroke-width="0.8"/><rect x="62.6" y="454.4" width="6.4" height="4.4" fill="#c4c6c8" stroke="none"/><path d="M65.8 453 V460.2" stroke="#23272d" stroke-width="0.6"/><rect x="74.4" y="454.4" width="6.4" height="4.6" rx="0.6" fill="#e6e8ea" stroke="none"/><circle cx="77.6" cy="456.7" r="1.2" fill="#23272d" stroke="none"/><circle cx="89.6" cy="455.8" r="1.4"/><path d="M90.6 456.8 L92.4 458.6" stroke-width="1.1"/><path d="M99.6 456.6 H103.6" stroke-width="1"/><path d="M180.6 456.6 H185 M182.8 454.4 V458.8" stroke-width="1"/></svg>
<div class="a" style="left:108px;top:455.6px;width:68px;height:2.2px;background:#181b1f;border-radius:1px"></div>
<div class="a" style="left:108px;top:455.6px;width:34px;height:2.2px;background:#4a5057;border-radius:1px"></div>
<div class="a c" style="left:140.4px;top:454.6px;width:4.4px;height:4.4px;background:#eceef0"></div>
<svg class="a" style="left:955px;top:452px" width="12" height="8" viewBox="0 0 12 8"><path d="M8 1.6 H1.2 V6.6 H9.4 V4" fill="none" stroke="#8a8e93" stroke-width="0.8"/><path d="M7.6 3.6 L10 1.2 M8.4 1 H10.2 V2.8" stroke="#8a8e93" stroke-width="0.7" fill="none"/></svg>
<div class="a" style="left:970px;top:453.8px;width:47px;height:2px;background:#181b1f"></div>
<div class="a" style="left:970px;top:457px;width:47px;height:2px;background:#181b1f"></div>
<!-- ruler -->
<div class="a" style="left:1.5px;top:461.7px;width:1020px;height:19px;background:#20242a"></div>
<div class="a" style="left:36.3px;top:461.7px;width:985px;height:5.6px;background:#101316"></div>
<svg class="a" style="left:0;top:0" width="1024" height="561" viewBox="0 0 1024 561" stroke="#30353b" stroke-width="0.8"><path d="M36.80 468 V473"/><path d="M43.05 468 V471.5"/><path d="M49.30 468 V471.5"/><path d="M55.55 468 V471.5"/><path d="M61.80 468 V471.5"/><path d="M68.05 468 V471.5"/><path d="M74.30 468 V471.5"/><path d="M80.55 468 V471.5"/><path d="M86.80 468 V471.5"/><path d="M93.05 468 V471.5"/><path d="M99.30 468 V471.5"/><path d="M105.55 468 V471.5"/><path d="M111.80 468 V471.5"/><path d="M118.05 468 V471.5"/><path d="M124.30 468 V471.5"/><path d="M130.55 468 V473"/><path d="M136.80 468 V471.5"/><path d="M143.05 468 V471.5"/><path d="M149.30 468 V471.5"/><path d="M155.55 468 V471.5"/><path d="M161.80 468 V471.5"/><path d="M168.05 468 V471.5"/><path d="M174.30 468 V471.5"/><path d="M180.55 468 V471.5"/><path d="M186.80 468 V471.5"/><path d="M193.05 468 V471.5"/><path d="M199.30 468 V471.5"/><path d="M205.55 468 V471.5"/><path d="M211.80 468 V471.5"/><path d="M218.05 468 V471.5"/><path d="M224.30 468 V473"/><path d="M230.55 468 V471.5"/><path d="M236.80 468 V471.5"/><path d="M243.05 468 V471.5"/><path d="M249.30 468 V471.5"/><path d="M255.55 468 V471.5"/><path d="M261.80 468 V471.5"/><path d="M268.05 468 V471.5"/><path d="M274.30 468 V471.5"/><path d="M280.55 468 V471.5"/><path d="M286.80 468 V471.5"/><path d="M293.05 468 V471.5"/><path d="M299.30 468 V471.5"/><path d="M305.55 468 V471.5"/><path d="M311.80 468 V471.5"/><path d="M318.05 468 V473"/><path d="M324.30 468 V471.5"/><path d="M330.55 468 V471.5"/><path d="M336.80 468 V471.5"/><path d="M343.05 468 V471.5"/><path d="M349.30 468 V471.5"/><path d="M355.55 468 V471.5"/><path d="M361.80 468 V471.5"/><path d="M368.05 468 V471.5"/><path d="M374.30 468 V471.5"/><path d="M380.55 468 V471.5"/><path d="M386.80 468 V471.5"/><path d="M393.05 468 V471.5"/><path d="M399.30 468 V471.5"/><path d="M405.55 468 V471.5"/><path d="M411.80 468 V473"/><path d="M418.05 468 V471.5"/><path d="M424.30 468 V471.5"/><path d="M430.55 468 V471.5"/><path d="M436.80 468 V471.5"/><path d="M443.05 468 V471.5"/><path d="M449.30 468 V471.5"/><path d="M455.55 468 V471.5"/><path d="M461.80 468 V471.5"/><path d="M468.05 468 V471.5"/><path d="M474.30 468 V471.5"/><path d="M480.55 468 V471.5"/><path d="M486.80 468 V471.5"/><path d="M493.05 468 V471.5"/><path d="M499.30 468 V471.5"/><path d="M505.55 468 V473"/><path d="M511.80 468 V471.5"/><path d="M518.05 468 V471.5"/><path d="M524.30 468 V471.5"/><path d="M530.55 468 V471.5"/><path d="M536.80 468 V471.5"/><path d="M543.05 468 V471.5"/><path d="M549.30 468 V471.5"/><path d="M555.55 468 V471.5"/><path d="M561.80 468 V471.5"/><path d="M568.05 468 V471.5"/><path d="M574.30 468 V471.5"/><path d="M580.55 468 V471.5"/><path d="M586.80 468 V471.5"/><path d="M593.05 468 V471.5"/><path d="M599.30 468 V473"/><path d="M605.55 468 V471.5"/><path d="M611.80 468 V471.5"/><path d="M618.05 468 V471.5"/><path d="M624.30 468 V471.5"/><path d="M630.55 468 V471.5"/><path d="M636.80 468 V471.5"/><path d="M643.05 468 V471.5"/><path d="M649.30 468 V471.5"/><path d="M655.55 468 V471.5"/><path d="M661.80 468 V471.5"/><path d="M668.05 468 V471.5"/><path d="M674.30 468 V471.5"/><path d="M680.55 468 V471.5"/><path d="M686.80 468 V471.5"/><path d="M693.05 468 V473"/><path d="M699.30 468 V471.5"/><path d="M705.55 468 V471.5"/><path d="M711.80 468 V471.5"/><path d="M718.05 468 V471.5"/><path d="M724.30 468 V471.5"/><path d="M730.55 468 V471.5"/><path d="M736.80 468 V471.5"/><path d="M743.05 468 V471.5"/><path d="M749.30 468 V471.5"/><path d="M755.55 468 V471.5"/><path d="M761.80 468 V471.5"/><path d="M768.05 468 V471.5"/><path d="M774.30 468 V471.5"/><path d="M780.55 468 V471.5"/><path d="M786.80 468 V473"/><path d="M793.05 468 V471.5"/><path d="M799.30 468 V471.5"/><path d="M805.55 468 V471.5"/><path d="M811.80 468 V471.5"/><path d="M818.05 468 V471.5"/><path d="M824.30 468 V471.5"/><path d="M830.55 468 V471.5"/><path d="M836.80 468 V471.5"/><path d="M843.05 468 V471.5"/><path d="M849.30 468 V471.5"/><path d="M855.55 468 V471.5"/><path d="M861.80 468 V471.5"/><path d="M868.05 468 V471.5"/><path d="M874.30 468 V471.5"/><path d="M880.55 468 V473"/><path d="M886.80 468 V471.5"/><path d="M893.05 468 V471.5"/><path d="M899.30 468 V471.5"/><path d="M905.55 468 V471.5"/><path d="M911.80 468 V471.5"/><path d="M918.05 468 V471.5"/><path d="M924.30 468 V471.5"/><path d="M930.55 468 V471.5"/><path d="M936.80 468 V471.5"/><path d="M943.05 468 V471.5"/><path d="M949.30 468 V471.5"/><path d="M955.55 468 V471.5"/><path d="M961.80 468 V471.5"/><path d="M968.05 468 V471.5"/><path d="M974.30 468 V473"/><path d="M980.55 468 V471.5"/><path d="M986.80 468 V471.5"/><path d="M993.05 468 V471.5"/><path d="M999.30 468 V471.5"/><path d="M1005.55 468 V471.5"/><path d="M1011.80 468 V471.5"/><path d="M1018.05 468 V471.5"/><path d="M1024.30 468 V471.5"/><path d="M1030.55 468 V471.5"/></svg>
<div class="rl" style="left:37.30px">0:00:00;00</div>
<div class="rl" style="left:131.05px">0:00:15;00</div>
<div class="rl" style="left:224.80px">0:00:30;00</div>
<div class="rl" style="left:318.55px">0:00:45;00</div>
<div class="rl" style="left:412.30px">0:01:00;00</div>
<div class="rl" style="left:506.05px">0:01:15;00</div>
<div class="rl" style="left:599.80px">0:01:30;00</div>
<div class="rl" style="left:693.55px">0:01:45;00</div>
<div class="rl" style="left:787.30px">0:02:00;00</div>
<div class="rl" style="left:881.05px">0:02:15;00</div>
<div class="rl" style="left:974.80px">0:02:30;00</div>
<svg class="a" style="left:0;top:461px" width="36" height="20" viewBox="0 461 36 20"><rect x="6" y="465" width="1" height="10" fill="#15181b"/><circle cx="6.5" cy="474" r="1.2" fill="#e6e8ea"/><circle cx="14" cy="467.5" r="0.6" fill="#6a6e73"/><circle cx="14" cy="471.5" r="0.8" fill="#50555b"/><circle cx="14" cy="475" r="0.6" fill="#6a6e73"/><path d="M28 464.8 L30.2 467 L28 469.2 L25.8 467Z" fill="#d8dadc"/><path d="M26 474.4 L28 476.4 L30 474.4" fill="none" stroke="#d8dadc" stroke-width="0.9"/></svg>
<!-- tracks -->
<div class="a" style="left:36.3px;top:480.2px;width:985.5px;height:78.5px;background:#171a1d;border-radius:0 0 5px 0"></div>
<div class="a" style="left:1.5px;top:480.2px;width:34.8px;height:78.5px;background:#2a2e35;border-radius:0 0 0 5px"></div>
<div class="a" style="left:1.5px;top:484px;width:34.8px;height:23.4px;background:#30353c"></div>
<div class="t" style="left:5.8px;top:494.7px;font-size:4.6px;color:#dcdee0">Track 3</div>
<svg class="a" style="left:26px;top:484px" width="8" height="24" viewBox="0 0 8 24" fill="none" stroke="#15181b" stroke-width="1"><path d="M1.4 5 Q3.6 2.8 5.8 5 Q3.6 7.2 1.4 5Z"/><path d="M2 10.2 H4 Q6 10.2 6 12 Q6 13.8 4 13.8 H2"/><rect x="2.2" y="17" width="3" height="3" rx="0.8" fill="#15181b" stroke="none"/></svg>
<div class="a" style="left:1.5px;top:507.9px;width:34.8px;height:23.1px;background:#30353c"></div>
<div class="t" style="left:5.8px;top:518.5px;font-size:4.6px;color:#dcdee0">Track 2</div>
<svg class="a" style="left:26px;top:507.9px" width="8" height="24" viewBox="0 0 8 24" fill="none" stroke="#15181b" stroke-width="1"><path d="M1.4 5 Q3.6 2.8 5.8 5 Q3.6 7.2 1.4 5Z"/><path d="M2 10.2 H4 Q6 10.2 6 12 Q6 13.8 4 13.8 H2"/><rect x="2.2" y="17" width="3" height="3" rx="0.8" fill="#15181b" stroke="none"/></svg>
<div class="a" style="left:1.5px;top:531.5px;width:34.8px;height:23.5px;background:#30353c"></div>
<div class="t" style="left:5.8px;top:542.3px;font-size:4.6px;color:#dcdee0">Track 1</div>
<svg class="a" style="left:26px;top:531.5px" width="8" height="24" viewBox="0 0 8 24" fill="none" stroke="#15181b" stroke-width="1"><path d="M1.4 5 Q3.6 2.8 5.8 5 Q3.6 7.2 1.4 5Z"/><path d="M2 10.2 H4 Q6 10.2 6 12 Q6 13.8 4 13.8 H2"/><rect x="2.2" y="17" width="3" height="3" rx="0.8" fill="#15181b" stroke="none"/></svg>
<div class="a" style="left:239.6px;top:462.2px;width:4.8px;height:5.6px;background:#4aa84a"></div>
<div class="a" style="left:254.7px;top:462.2px;width:4.8px;height:5.6px;background:#d02a2a"></div>
<svg class="a" style="left:244px;top:462px" width="11.5" height="9" viewBox="0 0 11.5 9"><path d="M0.4 0.2 H10.8 V5 L5.6 8.8 L0.4 5Z" fill="#6aa0b0"/></svg>
<div class="t" style="left:261.7px;top:462.6px;font-size:4.9px;color:#b8bcc0;font-weight:normal">0:00:34;05</div>
<div class="a" style="left:176px;top:485.2px;width:94px;height:21.2px;background:#3b4149;border:1px solid #b8a24e;border-radius:1.5px"></div>
<div class="t" style="left:178.4px;top:489.8px;font-size:13.4px;color:#f4f4f4;transform-origin:0 0;transform:scaleX(0.9);-webkit-text-stroke:0.3px #f4f4f4">ABC</div>
<div class="t" style="left:209.2px;top:493.4px;font-size:5.7px;color:#d4d6d8;font-weight:normal">Callout</div>
<svg class="a" style="left:219.5px;top:502.5px" width="7" height="4" viewBox="0 0 7 4"><path d="M1 3.6 L3.5 0.6 L6 3.6Z" fill="#e8eaec"/></svg>
<div class="a" style="left:176px;top:508.8px;width:94px;height:20.8px;background:#323940;border-radius:1.5px"></div>
<div class="a" style="left:177.5px;top:510.5px;width:30px;height:17px;background:linear-gradient(#424a4c,#3c4640 45%,#435046)"></div>
<div class="t" style="left:211px;top:516.4px;font-size:5.7px;color:#454e55;font-weight:normal">nature-and-landscape</div>
<div class="a" style="left:37px;top:508.6px;width:93.5px;height:21.5px;background:#3b4149;border-radius:1.5px;overflow:hidden"><div class="a" style="left:0;top:19.4px;width:93.5px;height:2.1px;background:#787d84"></div></div>
<div class="a" style="left:41px;top:518.4px;width:8px;height:2.2px;background:linear-gradient(90deg,rgba(40,140,120,0),#2a9a7a);border-radius:1px"></div>
<div class="a c" style="left:41.6px;top:518.4px;width:2.2px;height:2.2px;background:#e8f0ec"></div>
<div class="t" style="left:47.9px;top:513.6px;font-size:12px;color:#f4f4f4;transform-origin:0 0;transform:scaleX(0.69);-webkit-text-stroke:0.4px #f4f4f4">ABC</div>
<div class="t" style="left:79.7px;top:516.6px;font-size:5.7px;color:#d4d6d8;font-weight:normal">Callout</div>
<svg class="a" style="left:80.5px;top:524.3px" width="7" height="4" viewBox="0 0 7 4"><path d="M1 3.6 L3.5 0.6 L6 3.6Z" fill="#e8eaec"/></svg>
<div class="a" style="left:37px;top:532.2px;width:93.5px;height:21.8px;background:#3b4149;border-radius:1.5px;overflow:hidden"><svg class="a" style="left:1.7px;top:2.3px" width="29.8" height="17.2"><use href="#hill" width="29.8" height="17.2"/></svg><div class="t" style="left:35.6px;top:8.2px;font-size:6.26px;color:#d4d6d8;font-weight:normal">nature-and-landscape</div></div>
<div class="a" style="left:249.3px;top:468px;width:1px;height:86.5px;background:#b8bcc0"></div>
<div class="a" style="left:1018px;top:490.7px;width:2.6px;height:63.6px;background:#a6aaae;border-radius:1.3px"></div>
<div class="t" style="left:963.4px;top:547.8px;font-size:9.1px;color:#030303;font-weight:bold;-webkit-text-stroke:0.2px #030303">utvid.com</div>
<!--END-->
</body></html>
